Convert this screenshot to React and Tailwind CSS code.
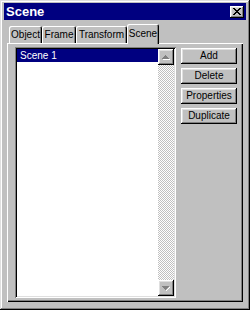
import React from 'react'

const raised = "shadow-[inset_-1px_-1px_#000000,inset_1px_1px_#ffffff,inset_-2px_-2px_#808080,inset_2px_2px_#dfdfdf]";

const CloseGlyph = () => (
  <svg width="8" height="7" viewBox="0 0 8 7" shapeRendering="crispEdges">
    <path fill="#000" d="M0 0h2v1H0zM6 0h2v1H6zM1 1h2v1H1zM5 1h2v1H5zM2 2h4v1H2zM3 3h2v1H3zM2 4h4v1H2zM1 5h2v1H1zM5 5h2v1H5zM0 6h2v1H0zM6 6h2v1H6z" />
  </svg>
);

const ArrowUp = () => (
  <svg width="8" height="5" viewBox="0 0 8 5" shapeRendering="crispEdges">
    <path fill="#ffffff" d="M1 4h7v1H1z" />
    <path fill="#808080" d="M3 0h1v1H3zM2 1h3v1H2zM1 2h5v1H1zM0 3h7v1H0z" />
  </svg>
);

const ArrowDown = () => (
  <svg width="8" height="5" viewBox="0 0 8 5" shapeRendering="crispEdges">
    <path fill="#ffffff" d="M7 1h1v1H7zM6 2h1v1H6zM5 3h1v1H5zM4 4h1v1H4z" />
    <path fill="#808080" d="M0 0h7v1H0zM1 1h5v1H1zM2 2h3v1H2zM3 3h1v1H3z" />
  </svg>
);

const tabs = [
  { label: 'Object', w: 'w-[33px]' },
  { label: 'Frame', w: 'w-[34px]' },
  { label: 'Transform', w: 'w-[51px]' },
];

const buttons = ['Add', 'Delete', 'Properties', 'Duplicate'];

export default function App() {
  return (
    <div className="w-[250px] h-[310px] bg-[#c0c0c0] shadow-[inset_-1px_-1px_#000000,inset_1px_1px_#dfdfdf,inset_-2px_-2px_#808080,inset_2px_2px_#ffffff] px-[4px] pt-[3px] pb-[8px] flex flex-col font-['Liberation_Sans',Arial,sans-serif] text-[10px] text-black leading-none">
      {/* title bar */}
      <div className="h-[17px] bg-[#000080] flex items-center justify-between pl-[2px] pr-[2px]">
        <span className="text-white font-bold text-[13px]">Scene</span>
        <button className={"w-[14px] h-[12px] bg-[#c0c0c0] flex items-center justify-center " + raised}>
          <CloseGlyph />
        </button>
      </div>

      {/* tabs */}
      <div className="flex items-end h-[19px] mt-[4px] mx-[3px] pl-[2px]">
        {tabs.map((t) => (
          <div key={t.label} className={t.w + " h-[17px] flex items-center justify-center rounded-t-[2px] bg-[#c0c0c0] shadow-[inset_1px_1px_#ffffff,inset_-1px_0_#000000,inset_-2px_0_#808080]"}>
            {t.label}
          </div>
        ))}
        <div className="w-[32px] h-[20px] -mb-[1px] relative z-10 flex items-center justify-center rounded-t-[2px] bg-[#c0c0c0] shadow-[inset_1px_1px_#ffffff,inset_-1px_0_#000000,inset_-2px_0_#808080]">
          Scene
        </div>
      </div>

      {/* panel */}
      <div className="flex-1 mx-[3px] flex bg-[#c0c0c0] shadow-[inset_1px_1px_#ffffff,inset_-1px_-1px_#000000,inset_-2px_-2px_#808080] pl-[8px] pt-[4px] pb-[4px]">
        <div className="w-[161px] flex p-[2px] bg-white shadow-[inset_1px_1px_#808080,inset_-1px_-1px_#ffffff,inset_2px_2px_#000000,inset_-2px_-2px_#dfdfdf]">
          <div className="flex-1 bg-white">
            <div className="h-[13px] bg-[#000080] text-white flex items-center pl-[3px]">Scene 1</div>
          </div>
          <div className="w-[16px] flex flex-col">
            <div className={"h-[16px] bg-[#c0c0c0] flex items-center justify-center " + raised}>
              <ArrowUp />
            </div>
            <div className="flex-1 bg-[image:repeating-conic-gradient(#c0c0c0_0%_25%,#ffffff_0%_50%)] bg-[length:2px_2px]" />
            <div className={"h-[16px] bg-[#c0c0c0] flex items-center justify-center " + raised}>
              <ArrowDown />
            </div>
          </div>
        </div>
        <div className="flex flex-col gap-[4px] ml-[5px] mt-[1px]">
          {buttons.map((b) => (
            <button key={b} className={"w-[56px] h-[16px] bg-[#c0c0c0] flex items-center justify-center " + raised}>
              {b}
            </button>
          ))}
        </div>
      </div>
    </div>
  );
}
